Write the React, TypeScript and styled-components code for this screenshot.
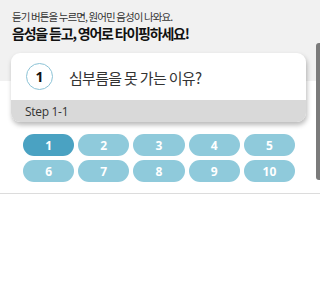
import React from "react";
import styled, { createGlobalStyle } from "styled-components";

const GlobalStyle = createGlobalStyle`
  html, body {
    margin: 0;
    padding: 0;
    background: #ffffff;
  }
  body {
    font-family: "Noto Sans CJK KR", "Noto Sans", sans-serif;
    color: #222;
  }
`;

const Page = styled.div`
  position: relative;
  width: 320px;
  height: 297px;
  overflow: hidden;
  background: linear-gradient(#f1f1f1 0, #f1f1f1 81px, #ffffff 81px);
`;

const Header = styled.div`
  padding: 9px 12px 0 12px;
  display: flex;
  flex-direction: column;
`;

const Guide = styled.div`
  font-size: 10.5px;
  line-height: 15px;
  color: #333;
  letter-spacing: -0.9px;
`;

const Title = styled.div`
  font-size: 14px;
  line-height: 19px;
  font-weight: 700;
  color: #111;
  letter-spacing: -1.2px;
`;

const Card = styled.div`
  margin: 10px 14px 0 11px;
  background: #fff;
  border-radius: 9px;
  overflow: hidden;
  box-shadow: 1px 3px 5px rgba(0, 0, 0, 0.28);
`;

const QuestionRow = styled.div`
  height: 47px;
  display: flex;
  align-items: center;
  padding-left: 15px;
  gap: 16px;
`;

const NumberCircle = styled.div`
  width: 25px;
  height: 25px;
  border-radius: 50%;
  border: 1px solid #8cc3d6;
  display: flex;
  align-items: center;
  justify-content: center;
  font-family: "Open Sans", "Noto Sans", sans-serif;
  font-weight: 700;
  font-size: 14px;
  color: #111;
`;

const Question = styled.div`
  font-size: 15px;
  color: #333;
  letter-spacing: -0.7px;
  padding-top: 1px;
`;

const StepBar = styled.div`
  height: 22px;
  background: #d9d9d9;
  display: flex;
  align-items: center;
  padding-left: 14px;
  font-family: "Open Sans", "Noto Sans", sans-serif;
  font-size: 12px;
  color: #333;
  letter-spacing: -0.3px;
`;

const Grid = styled.div`
  margin: 12px 0 0 23px;
  width: 272px;
  display: grid;
  grid-template-columns: repeat(5, 1fr);
  column-gap: 4px;
  row-gap: 4px;
`;

const NumButton = styled.button<{ $active?: boolean }>`
  height: 22px;
  border: none;
  border-radius: 11px;
  padding: 0;
  background: ${(p) => (p.$active ? "#4aa2c2" : "#8fcadb")};
  color: #fff;
  font-family: "Noto Sans", sans-serif;
  font-weight: 700;
  font-size: 12px;
`;

const Divider = styled.div`
  margin-top: 11px;
  height: 1px;
  background: #dcdcdc;
`;

const ScrollThumb = styled.div`
  position: absolute;
  right: 0;
  top: 43px;
  width: 4px;
  height: 137px;
  background: #7b7b7b;
  border-radius: 3px 0 0 3px;
`;

const numbers = [1, 2, 3, 4, 5, 6, 7, 8, 9, 10];

export default function App() {
  return (
    <>
      <GlobalStyle />
      <Page>
        <Header>
          <Guide>듣기 버튼을 누르면, 원어민 음성이 나와요.</Guide>
          <Title>음성을 듣고, 영어로 타이핑하세요!</Title>
        </Header>
        <Card>
          <QuestionRow>
            <NumberCircle>1</NumberCircle>
            <Question>심부름을 못 가는 이유?</Question>
          </QuestionRow>
          <StepBar>Step 1-1</StepBar>
        </Card>
        <Grid>
          {numbers.map((n) => (
            <NumButton key={n} $active={n === 1}>
              {n}
            </NumButton>
          ))}
        </Grid>
        <Divider />
        <ScrollThumb />
      </Page>
    </>
  );
}
